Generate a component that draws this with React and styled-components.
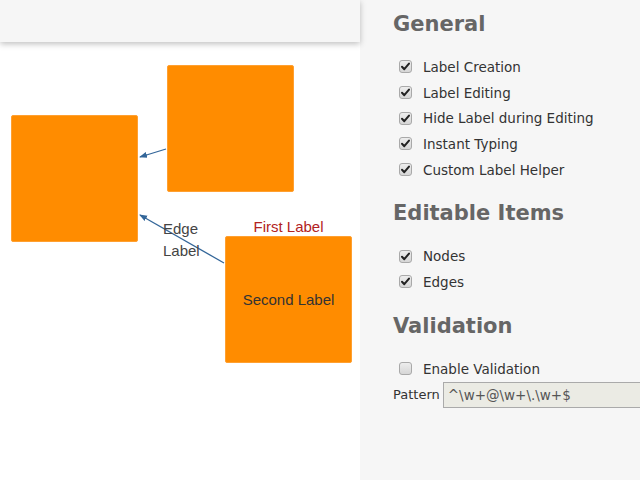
import styled, { createGlobalStyle } from 'styled-components';

const GlobalStyle = createGlobalStyle`
  html, body {
    margin: 0;
    padding: 0;
    width: 640px;
    height: 480px;
    overflow: hidden;
  }
`;

const nodes = [
  { id: 'a', x: 11, y: 115 },
  { id: 'b', x: 167, y: 65 },
  { id: 'c', x: 225, y: 236, label: 'Second Label' },
];

const generalItems = [
  'Label Creation',
  'Label Editing',
  'Hide Label during Editing',
  'Instant Typing',
  'Custom Label Helper',
];

const editableItems = ['Nodes', 'Edges'];

function CheckBox({ checked }) {
  return (
    <Box>
      {checked && (
        <svg width="11" height="11" viewBox="0 0 11 11">
          <path d="M2 5.8 L4.3 8.2 L9 2.6" fill="none" stroke="#222" strokeWidth="2" strokeLinecap="round" strokeLinejoin="round" />
        </svg>
      )}
    </Box>
  );
}

function App() {
  return (
    <Page>
      <GlobalStyle />
      <GraphArea>
        <Toolbar />
        <Canvas>
          <Edges width="360" height="438">
            <defs>
              <marker id="arrow" markerWidth="8" markerHeight="8" refX="7" refY="4" orient="auto" markerUnits="userSpaceOnUse">
                <path d="M0,1 L8,4 L0,7 Z" fill="#336699" />
              </marker>
            </defs>
            <line x1="166" y1="107" x2="140" y2="115" stroke="#336699" strokeWidth="1.3" markerEnd="url(#arrow)" />
            <line x1="224" y1="221" x2="140" y2="173" stroke="#336699" strokeWidth="1.3" markerEnd="url(#arrow)" />
          </Edges>
          {nodes.map((n) => (
            <Node key={n.id} style={{ left: n.x, top: n.y - 42 }}>
              {n.label}
            </Node>
          ))}
          <EdgeLabel style={{ left: 163, top: 176 }}>
            Edge
            <br />
            Label
          </EdgeLabel>
          <NodeLabel style={{ left: 225, top: 176 }}>First Label</NodeLabel>
        </Canvas>
      </GraphArea>
      <Panel>
        <Heading>General</Heading>
        <List>
          {generalItems.map((t) => (
            <Option key={t}>
              <CheckBox checked />
              {t}
            </Option>
          ))}
        </List>
        <Heading>Editable Items</Heading>
        <List>
          {editableItems.map((t) => (
            <Option key={t}>
              <CheckBox checked />
              {t}
            </Option>
          ))}
        </List>
        <Heading>Validation</Heading>
        <List>
          <Option>
            <CheckBox />
            Enable Validation
          </Option>
        </List>
        <PatternRow>
          <PatternLabel>Pattern</PatternLabel>
          <PatternInput defaultValue="^\w+@\w+\.\w+$" disabled />
        </PatternRow>
      </Panel>
    </Page>
  );
}
export default App;

const Page = styled.div`
  display: flex;
  width: 640px;
  height: 480px;
  background: #fff;
  overflow: hidden;
`;

const GraphArea = styled.div`
  width: 360px;
  flex-shrink: 0;
  display: flex;
  flex-direction: column;
`;

const Toolbar = styled.div`
  height: 42px;
  background: #f6f6f6;
  box-shadow: 0 2px 6px rgba(0, 0, 0, 0.25);
  position: relative;
  z-index: 1;
`;

const Canvas = styled.div`
  position: relative;
  flex: 1;
  background: #fff;
  font-family: "Liberation Sans", Arial, sans-serif;
  font-size: 15px;
`;

const Edges = styled.svg`
  position: absolute;
  left: 0;
  top: 0;
`;

const Node = styled.div`
  position: absolute;
  width: 127px;
  height: 127px;
  box-sizing: border-box;
  background: #ff8c00;
  border: 1px solid #ffa031;
  border-radius: 2px;
  display: flex;
  align-items: center;
  justify-content: center;
  color: #333;
`;

const EdgeLabel = styled.div`
  position: absolute;
  color: #444;
  line-height: 22px;
`;

const NodeLabel = styled.div`
  position: absolute;
  width: 127px;
  text-align: center;
  color: #b22222;
  line-height: 18px;
`;

const Panel = styled.div`
  width: 280px;
  flex-shrink: 0;
  overflow: hidden;
  background: #f6f6f6;
  padding: 10px 0 0 33px;
  box-sizing: border-box;
  font-family: "DejaVu Sans", Verdana, sans-serif;
  font-size: 13.5px;
  color: #333;
`;

const Heading = styled.h2`
  margin: 0 0 16px;
  font-size: 21px;
  font-weight: bold;
  color: #666;
  line-height: 28px;
`;

const List = styled.div`
  display: flex;
  flex-direction: column;
  margin-bottom: 17px;
`;

const Option = styled.label`
  display: flex;
  align-items: center;
  height: 25.7px;
  gap: 11px;
`;

const Box = styled.span`
  margin-left: 6px;
  width: 13px;
  height: 13px;
  box-sizing: border-box;
  border: 1px solid #a9a9a9;
  border-radius: 3px;
  background: linear-gradient(#ededed, #d6d6d6);
  display: flex;
  align-items: center;
  justify-content: center;
  flex-shrink: 0;
`;

const PatternRow = styled.div`
  display: flex;
  align-items: center;
  gap: 3px;
  margin-top: -17px;
`;

const PatternLabel = styled.span`
  font-size: 13px;
`;

const PatternInput = styled.input`
  width: 240px;
  flex-shrink: 0;
  height: 26px;
  box-sizing: border-box;
  padding: 0 4px;
  border: 1px solid #aaa;
  background: #ebebe4;
  font-family: "DejaVu Sans", Verdana, sans-serif;
  font-size: 13.5px;
  color: #555;
`;
